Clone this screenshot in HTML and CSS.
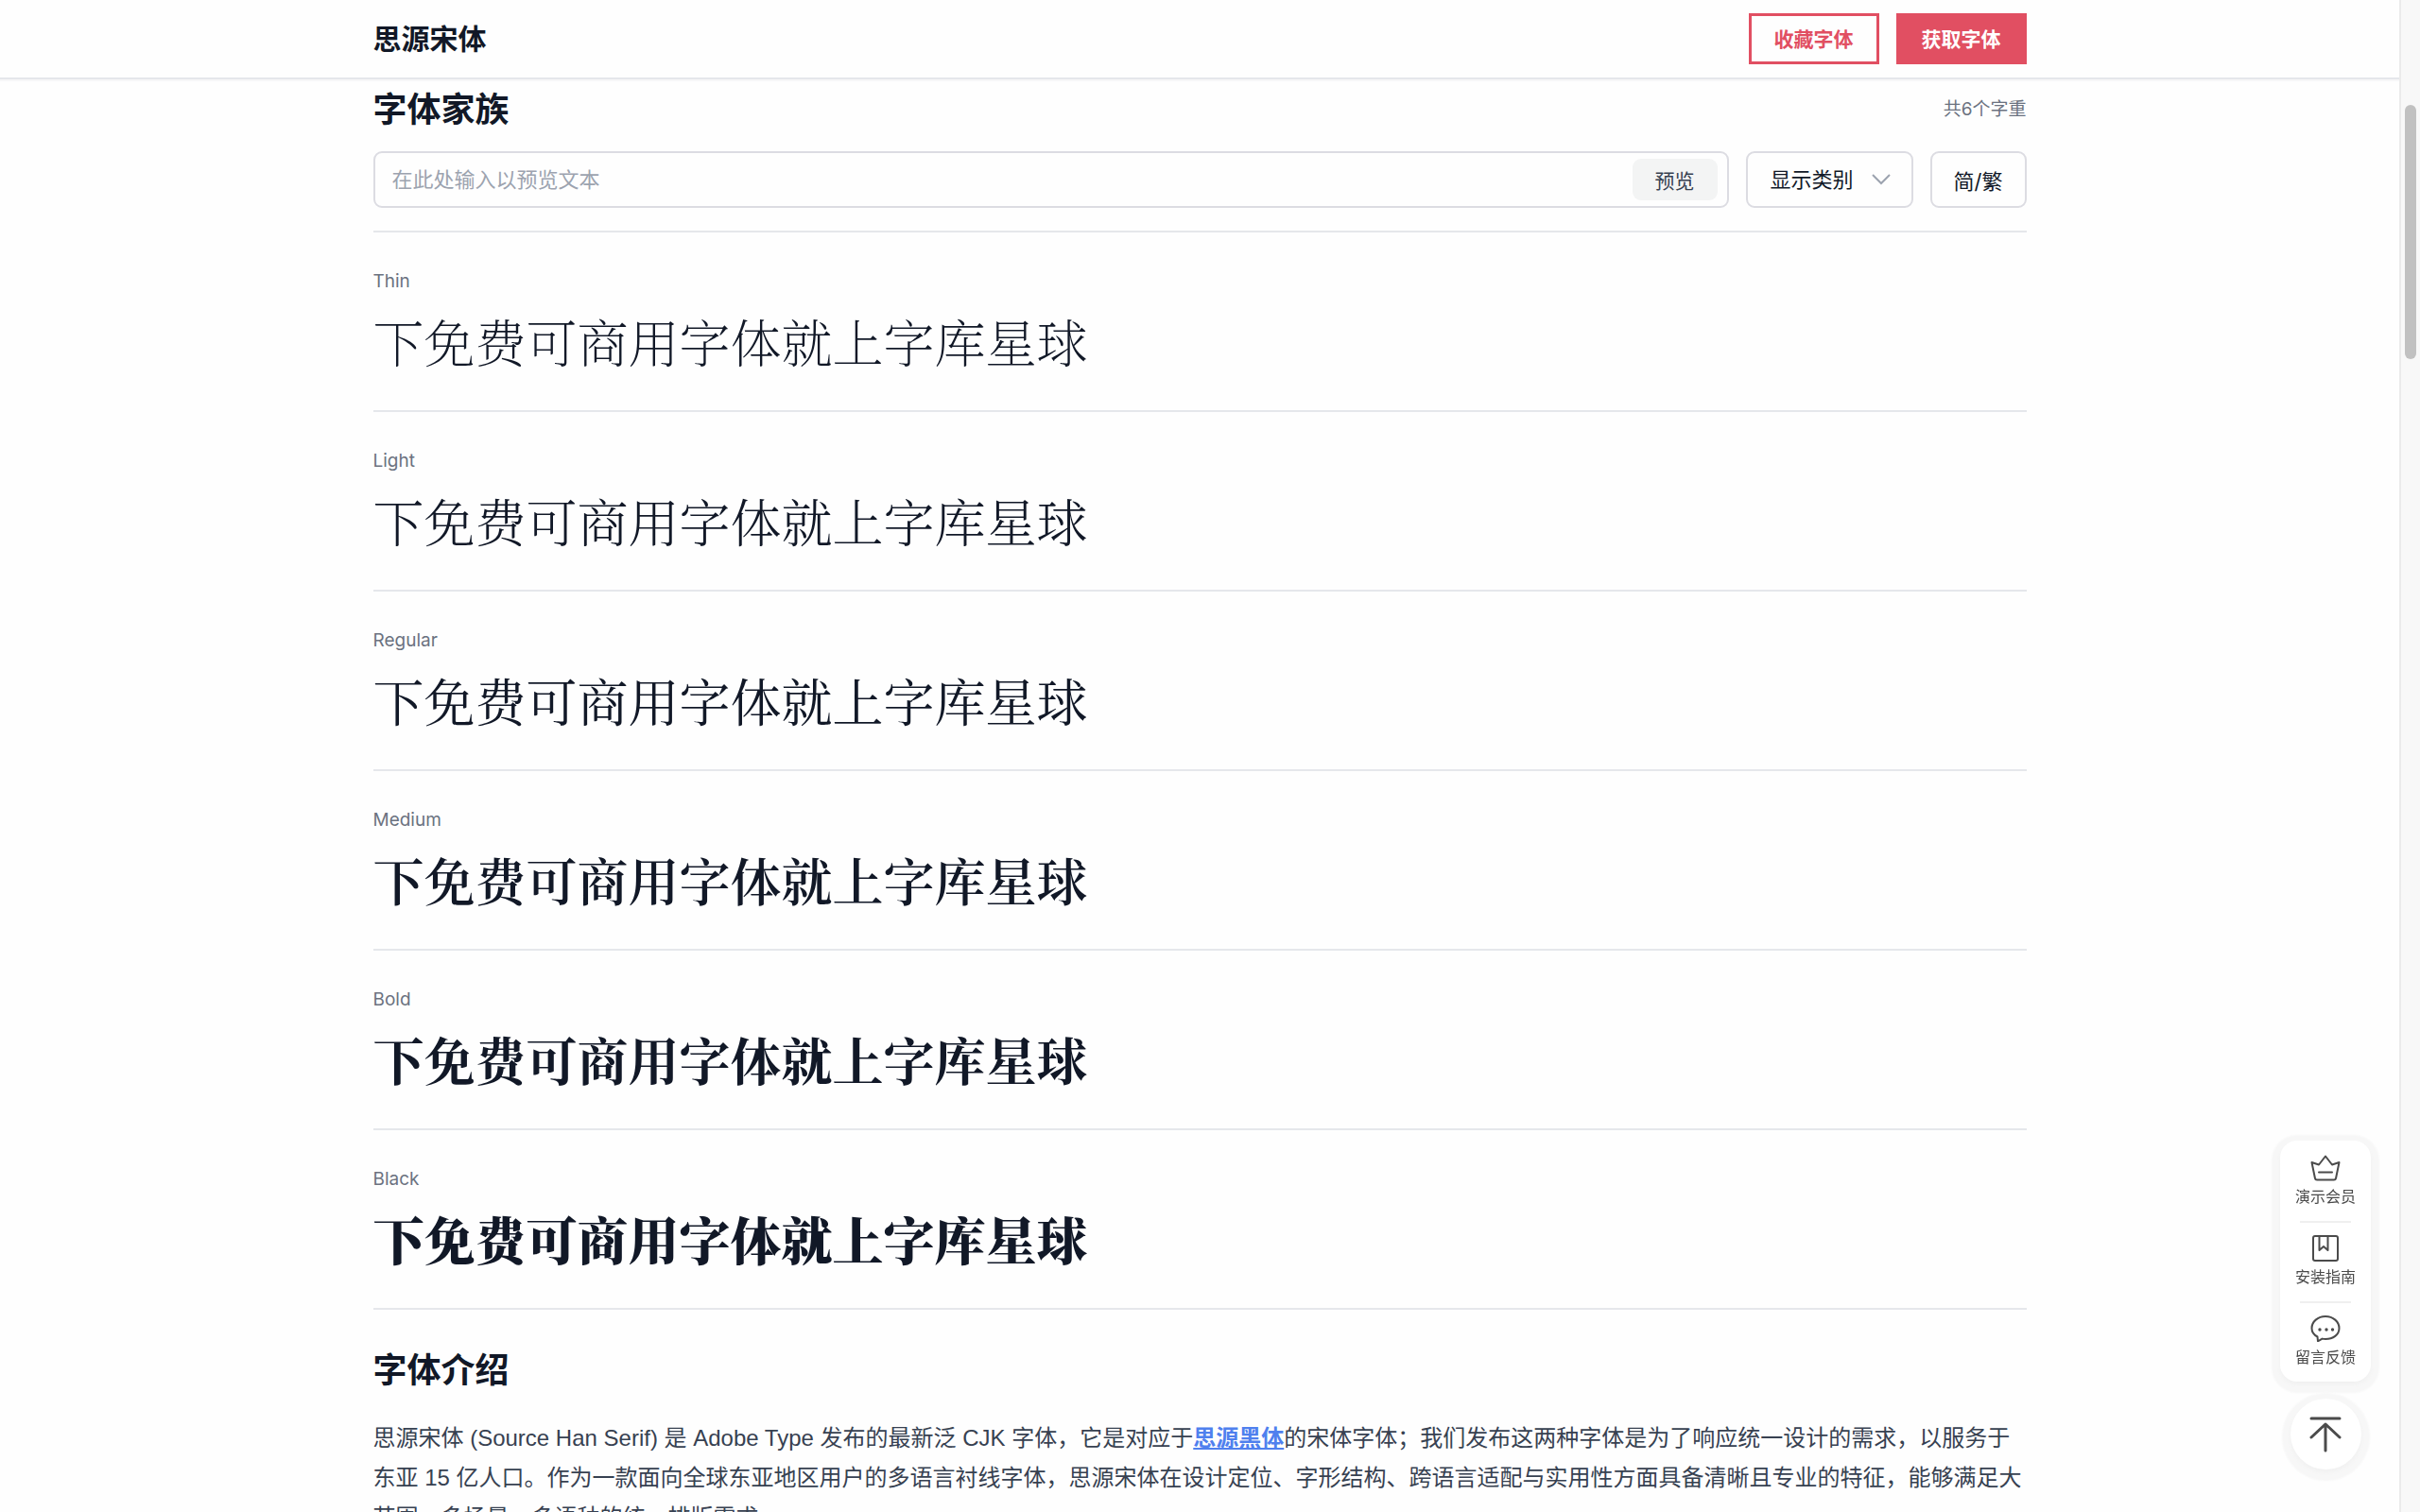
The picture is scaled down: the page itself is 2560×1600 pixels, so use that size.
FILE: index.html
```html
<!DOCTYPE html>
<html lang="zh-CN">

<head>
    <meta charset="UTF-8">
    <meta name="viewport" content="width=device-width, initial-scale=1.0">
    <title>思源宋体</title>
    <link rel="stylesheet" href="styles.css">
</head>

<body>
    <div class="page">
        <header class="topbar">
            <div class="container topbar-inner">
                <h1>思源宋体</h1>
                <div class="topbar-actions">
                    <button type="button" class="btn btn-outline">收藏字体</button>
                    <button type="button" class="btn btn-primary">获取字体</button>
                </div>
            </div>
        </header>

        <main class="container">
            <section class="family">
                <div class="section-head">
                    <h2>字体家族</h2>
                    <span class="count">共6个字重</span>
                </div>
                <form class="filters">
                    <div class="preview-box">
                        <input type="text" id="preview" placeholder="在此处输入以预览文本" aria-label="预览文本">
                        <button type="button" class="preview-btn">预览</button>
                    </div>
                    <div class="select-box">
                        <select id="category" aria-label="显示类别">
                            <option>显示类别</option>
                        </select>
                        <svg class="chevron" viewBox="0 0 20 12" aria-hidden="true">
                            <path d="M1 1l9 9 9-9" />
                        </svg>
                    </div>
                    <button type="button" class="switch-btn">简/繁</button>
                </form>

                <ul class="weights">
                    <li>
                        <span class="weight-name">Thin</span>
                        <p class="sample thin">下免费可商用字体就上字库星球</p>
                    </li>
                    <li>
                        <span class="weight-name">Light</span>
                        <p class="sample light">下免费可商用字体就上字库星球</p>
                    </li>
                    <li>
                        <span class="weight-name">Regular</span>
                        <p class="sample regular">下免费可商用字体就上字库星球</p>
                    </li>
                    <li>
                        <span class="weight-name">Medium</span>
                        <p class="sample medium">下免费可商用字体就上字库星球</p>
                    </li>
                    <li>
                        <span class="weight-name">Bold</span>
                        <p class="sample bold">下免费可商用字体就上字库星球</p>
                    </li>
                    <li>
                        <span class="weight-name">Black</span>
                        <p class="sample black">下免费可商用字体就上字库星球</p>
                    </li>
                </ul>
            </section>

            <section class="intro">
                <h2>字体介绍</h2>
                <p>思源宋体 (Source Han Serif) 是 Adobe Type 发布的最新泛 CJK 字体，它是对应于<a href="#">思源黑体</a>的宋体字体；我们发布这两种字体是为了响应统一设计的需求，以服务于东亚 15 亿人口。作为一款面向全球东亚地区用户的多语言衬线字体，思源宋体在设计定位、字形结构、跨语言适配与实用性方面具备清晰且专业的特征，能够满足大范围、多场景、多语种的统一排版需求。</p>
            </section>
        </main>
    </div>

    <div class="scrollbar">
        <div class="thumb"></div>
    </div>

    <aside class="side-tools">
        <nav class="tool-card">
            <a href="#">
                <svg viewBox="0 0 32 28" aria-hidden="true">
                    <path d="M1.5 8l7.500 2.500 7-9 7 9 7.500-2.500-3.500 17q-.3 1.500-2 1.500H7q-1.700 0-2-1.500z" />
                    <path d="M9 18.500h14" />
                </svg>
                演示会员
            </a>
            <a href="#">
                <svg viewBox="0 0 32 28" aria-hidden="true">
                    <rect x="3" y="1" width="26" height="26" rx="2" />
                    <path d="M9.500 1v15l4.500-4 4.500 4V1" />
                </svg>
                安装指南
            </a>
            <a href="#">
                <svg viewBox="0 0 32 28" aria-hidden="true">
                    <path d="M7.500 22.500C3.500 20.500 1.500 17 1.500 13.500 1.500 6.500 8 1 16 1s14.500 5.500 14.500 12.500S24 25 16 25c-1.200 0-2.300-.1-3.400-.4L8 27.300z" />
                    <g class="dots">
                        <circle cx="10" cy="15" r="1.700" />
                        <circle cx="17" cy="15" r="1.700" />
                        <circle cx="23.500" cy="15" r="1.700" />
                    </g>
                </svg>
                留言反馈
            </a>
        </nav>
        <button type="button" class="to-top" aria-label="返回顶部">
            <svg viewBox="0 0 34 38" aria-hidden="true">
                <path d="M2 2h30M17 8v28M2 22L17 8l15 14" />
            </svg>
        </button>
    </aside>
</body>

</html>
```
FILE: styles.css
```css
* {
    box-sizing: border-box;
}

body {
    margin: 0;
    display: flex;
    height: 100vh;
    overflow: hidden;
    background-color: #fefefe;
    color: #111827;
    font-family: Inter, "Noto Sans CJK SC", sans-serif;
}

h1,
h2,
p,
ul {
    margin: 0;
    padding: 0;
}

button,
input,
select {
    font-family: inherit;
    color: inherit;
}

button {
    cursor: pointer;
}

.page {
    flex: 1;
    overflow: hidden;
}

.container {
    width: 100%;
    max-width: 1749px;
    margin: 0 auto;
}

/* top bar */
.topbar {
    border-bottom: 2px solid #e5e7eb;
    box-shadow: 0 2px 0 #f7f7f8;
}

.topbar-inner {
    display: flex;
    align-items: center;
    justify-content: space-between;
    height: 82px;
}

h1 {
    font-size: 30px;
    line-height: 40px;
}

.topbar-actions {
    display: flex;
    gap: 18px;
}

.btn {
    height: 54px;
    padding: 0 24px 2px;
    border: 3px solid #e14f62;
    font-size: 21px;
    font-weight: 600;
}

.btn-outline {
    background-color: #fefefe;
    color: #e14f62;
}

.btn-primary {
    background-color: #e14f62;
    color: white;
}

/* font family */
.section-head {
    display: flex;
    align-items: center;
    justify-content: space-between;
    padding: 8px 0 20px;
}

h2 {
    font-size: 36px;
    line-height: 48px;
}

.count {
    color: #6b7280;
    font-size: 19px;
    line-height: 26px;
}

.filters {
    display: flex;
    gap: 18px;
    padding-bottom: 24px;
    border-bottom: 2px solid #e5e7eb;
}

.preview-box,
.select-box,
.switch-btn {
    display: flex;
    align-items: center;
    height: 60px;
    border: 2px solid #dcdce2;
    border-radius: 9px;
    background-color: #fefefe;
}

.preview-box {
    flex: 1;
    padding-right: 10px;
}

.preview-box input {
    flex: 1;
    min-width: 0;
    height: 100%;
    padding: 0 18px;
    border: none;
    outline: none;
    background: none;
    font-size: 22px;
}

.preview-box input::placeholder {
    color: #9ca3af;
}

.preview-btn {
    height: 44px;
    padding: 0 24px;
    border: none;
    border-radius: 9px;
    background-color: #f3f4f4;
    color: #374151;
    font-size: 21px;
}

.select-box {
    position: relative;
}

.select-box select {
    height: 100%;
    padding: 0 60px 0 24px;
    border: none;
    outline: none;
    appearance: none;
    background: none;
    font-size: 22px;
}

.chevron {
    position: absolute;
    right: 22px;
    width: 20px;
    height: 12px;
    fill: none;
    stroke: #9ca3af;
    stroke-width: 2;
    pointer-events: none;
}

.switch-btn {
    padding: 0 23px;
    font-size: 22px;
}

.weights {
    list-style: none;
}

.weights li {
    height: 190px;
    padding-top: 39px;
    border-bottom: 2px solid #e5e7eb;
}

.weight-name {
    display: block;
    color: #6b7280;
    font-size: 19px;
    line-height: 26px;
}

.sample {
    margin-top: 10px;
    font-family: "Noto Serif CJK SC", "Noto Sans CJK SC", serif;
    font-size: 54px;
    line-height: 80px;
    white-space: nowrap;
}

.thin {
    font-weight: 200;
}

.light {
    font-weight: 300;
}

.regular {
    font-weight: 400;
}

.medium {
    font-weight: 600;
}

.bold {
    font-weight: 700;
}

.black {
    font-weight: 900;
}

/* introduction */
.intro {
    padding-top: 40px;
}

.intro p {
    margin-top: 27px;
    color: #374151;
    font-family: "Liberation Sans", "Noto Sans CJK SC", sans-serif;
    font-size: 24px;
    line-height: 42px;
}

.intro a {
    color: #4f80ee;
    font-weight: 600;
    text-decoration: underline;
}

/* scrollbar */
.scrollbar {
    width: 22px;
    padding: 111px 4px 0;
    border-left: 2px solid #ebebeb;
    background-color: #f8f8f8;
}

.thumb {
    width: 12px;
    height: 269px;
    border-radius: 6px;
    background-color: #c1c1c1;
}

/* floating tools */
.side-tools {
    position: fixed;
    right: 52px;
    bottom: 45px;
    display: flex;
    flex-direction: column;
    align-items: center;
    gap: 18px;
}

.tool-card,
.to-top {
    background-color: white;
    box-shadow: 0 3px 4px #f1f1f1, 0 3px 2px 9px #f7f7f7;
}

.tool-card {
    width: 96px;
    padding: 0 6px;
    border-radius: 18px;
}

.tool-card a {
    display: flex;
    flex-direction: column;
    align-items: center;
    gap: 4px;
    height: 85px;
    padding-top: 15px;
    color: #4b4b4b;
    font-size: 16px;
    line-height: 24px;
    text-decoration: none;
}

.tool-card a + a::before {
    content: "";
    flex: none;
    width: 54px;
    height: 2px;
    margin: -15px 0 9px;
    background-color: #efefef;
}

.side-tools svg {
    fill: none;
    stroke: #4b4b4b;
    stroke-width: 2;
    stroke-linecap: round;
    stroke-linejoin: round;
}

.tool-card svg {
    flex: none;
    width: 32px;
    height: 28px;
}

.side-tools .dots {
    fill: #4b4b4b;
    stroke: none;
}

.to-top {
    display: flex;
    align-items: center;
    justify-content: center;
    width: 75px;
    height: 75px;
    padding: 0;
    border: none;
    border-radius: 50%;
}

.to-top svg {
    width: 34px;
    height: 38px;
    stroke-width: 3;
}
```
